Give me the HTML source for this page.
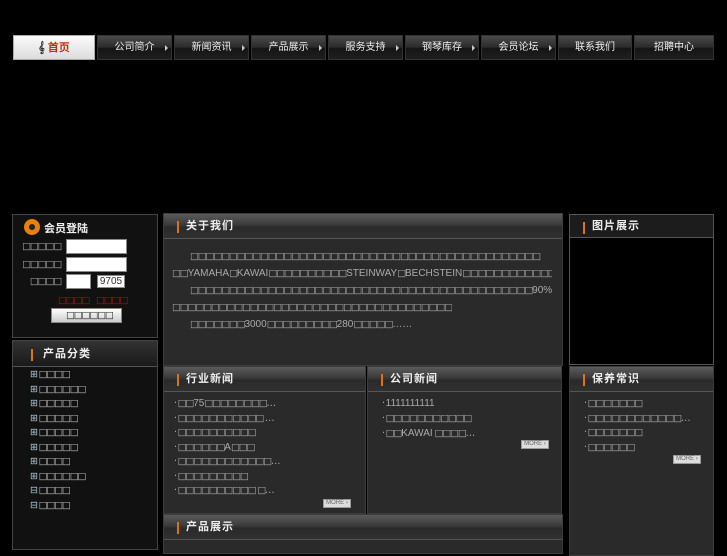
<!DOCTYPE html>
<html><head><meta charset="utf-8"><style>
*{margin:0;padding:0;box-sizing:border-box}
body{width:727px;height:545px;background:#000;position:relative;overflow:hidden;font-family:"Liberation Sans","Noto Sans CJK SC",sans-serif;color:#ccc;font-size:11px}
.a{position:absolute}
.nav{top:35px;height:25px;background:linear-gradient(#4a4a4a,#2a2a2a 50%,#151515 52%,#1e1e1e);border:1px solid #333;color:#eee;font-size:10px;text-align:center;line-height:24px}
.nav:after{content:"";position:absolute;right:3px;top:9px;border-left:3px solid #ccc;border-top:3px solid transparent;border-bottom:3px solid transparent}
.nav.n:after{display:none}
.panel{background:#2a2a2a;border:1px solid #3c3c3c}
.hd{height:25px;background:linear-gradient(#5a5a5a,#3a3a3a 45%,#2a2a2a 55%,#303030);border-bottom:1px solid #555;color:#eee;font-weight:bold;font-size:11px;line-height:25px;padding-left:22px;position:relative;letter-spacing:1px}
.hd:before{content:"";position:absolute;left:13px;top:7px;width:2px;height:12px;background:#e07010}
.b{font-family:"DejaVu Sans",sans-serif;font-size:9.5px;color:#aaa;letter-spacing:-1.2px}
.b2{font-family:"Liberation Sans",sans-serif;letter-spacing:0;font-size:10px}
.more{position:absolute;width:28px;height:9px;background:#ddd;border:1px solid #999;font-size:6px;color:#666;line-height:7px;text-align:center}
</style></head><body>
<div class="a" style="left:13px;top:35px;width:82px;height:25px;background:linear-gradient(#fafafa,#ddd);border:1px solid #aaa;color:#c03010;font-weight:bold;font-size:11px;line-height:24px;text-align:center"><span style="color:#333">𝄞</span> 首页</div>
<div class="a nav" style="left:97px;width:75px">公司简介</div>
<div class="a nav" style="left:174px;width:75px">新闻资讯</div>
<div class="a nav" style="left:251px;width:75px">产品展示</div>
<div class="a nav" style="left:328px;width:75px">服务支持</div>
<div class="a nav" style="left:405px;width:74px">钢琴库存</div>
<div class="a nav" style="left:481px;width:75px">会员论坛</div>
<div class="a nav n" style="left:558px;width:74px">联系我们</div>
<div class="a nav n" style="left:634px;width:80px">招聘中心</div>

<div class="a" style="left:12px;top:214px;width:146px;height:124px;background:#111;border:1px solid #444">
<div class="a" style="left:11px;top:4px;width:16px;height:16px;border-radius:50%;background:#e8800a"><div class="a" style="left:5px;top:5px;width:6px;height:6px;border-radius:50%;background:#222"></div></div>
<div class="a" style="left:31px;top:5px;font-weight:bold;color:#eee;font-size:11px">会员登陆</div>
<div class="a b" style="right:96px;top:26px">□□□□□</div><div class="a" style="left:53px;top:24px;width:61px;height:15px;background:#fff;border:1px solid #888"></div>
<div class="a b" style="right:96px;top:44px">□□□□□</div><div class="a" style="left:53px;top:42px;width:61px;height:15px;background:#fff;border:1px solid #888"></div>
<div class="a b" style="right:96px;top:61px">□□□□</div><div class="a" style="left:53px;top:59px;width:25px;height:15px;background:#fff;border:1px solid #888"></div>
<div class="a" style="left:84px;top:60px;width:28px;height:13px;background:#fff;border:1px solid #888;color:#333;font-size:10px;line-height:11px;text-align:center">9705</div>
<div class="a b" style="left:45px;top:80px;color:#d00">□□□□</div><div class="a b" style="left:83px;top:80px;color:#d00">□□□□</div>
<div class="a" style="left:38px;top:93px;width:71px;height:15px;background:linear-gradient(#fff,#ccc);border:1px solid #888"><span class="b" style="position:absolute;left:14px;top:1px;color:#222">□□□□□□</span></div>
</div>

<div class="a" style="left:12px;top:340px;width:146px;height:210px;background:#111;border:1px solid #444">
<div style="position:relative;height:26px;background:linear-gradient(#333,#1a1a1a);border-bottom:1px solid #555;color:#eee;font-weight:bold;font-size:11px;line-height:26px;padding-left:30px;letter-spacing:1px">产品分类<i style="position:absolute;left:18px;top:8px;width:2px;height:12px;background:#e07010"></i></div>
<div class="a b" style="left:17px;top:27px;line-height:14.5px;color:#bbb">
<div><span style="color:#acd">⊞</span> □□□□</div><div><span style="color:#acd">⊞</span> □□□□□□</div><div><span style="color:#acd">⊞</span> □□□□□</div><div><span style="color:#acd">⊞</span> □□□□□</div><div><span style="color:#acd">⊞</span> □□□□□</div><div><span style="color:#acd">⊞</span> □□□□□</div><div><span style="color:#acd">⊞</span> □□□□</div><div><span style="color:#acd">⊞</span> □□□□□□</div><div><span style="color:#acd">⊟</span> □□□□</div><div><span style="color:#acd">⊟</span> □□□□</div></div>
</div>

<div class="a panel" style="left:163px;top:213px;width:400px;height:153px">
<div class="hd">关于我们</div>
<div class="a b" style="left:8px;top:34px;width:380px;line-height:17px">
<div style="padding-left:18px;white-space:nowrap;overflow:hidden">□□□□□□□□□□□□□□□□□□□□□□□□□□□□□□□□□□□□□□□□□□□□□</div>
<div style="white-space:nowrap;overflow:hidden">□□<span class="b2">YAMAHA</span>□<span class="b2">KAWAI</span>□□□□□□□□□□<span class="b2">STEINWAY</span>□<span class="b2">BECHSTEIN</span>□□□□□□□□□□□□□□□□</div>
<div style="padding-left:18px;white-space:nowrap;overflow:hidden">□□□□□□□□□□□□□□□□□□□□□□□□□□□□□□□□□□□□□□□□□□□□<span class="b2">90%</span></div>
<div style="white-space:nowrap;overflow:hidden;width:280px">□□□□□□□□□□□□□□□□□□□□□□□□□□□□□□□□□□□□□□□□□□□□□</div>
<div style="padding-left:18px">□□□□□□□<span class="b2">3000</span>□□□□□□□□□<span class="b2">280</span>□□□□□<span class="b2">……</span></div></div>
</div>

<div class="a panel" style="left:163px;top:366px;width:203px;height:148px">
<div class="hd">行业新闻</div>
<div class="a b" style="left:10px;top:30px;line-height:14.5px">
<div>· □□<span class="b2">75</span>□□□□□□□□…</div><div>· □□□□□□□□□□□ …</div><div>· □□□□□□□□□□</div><div>· □□□□□□<span class="b2">A</span>□□□</div><div>· □□□□□□□□□□□□…</div><div>· □□□□□□□□□</div><div>· □□□□□□□□□□ □…</div></div>
<div class="more" style="left:159px;top:132px">MORE ›</div>
</div>
<div class="a panel" style="left:367px;top:366px;width:195px;height:148px">
<div class="hd">公司新闻</div>
<div class="a b" style="left:14px;top:29px;line-height:15px">
<div>· <span class="b2">1111111111</span></div><div>· □□□□□□□□□□□</div><div>· □□<span class="b2">KAWAI</span> □□□□…</div></div>
<div class="more" style="left:153px;top:73px">MORE ›</div>
</div>
<div class="a panel" style="left:163px;top:514px;width:400px;height:40px"><div class="hd">产品展示</div></div>

<div class="a" style="left:569px;top:214px;width:145px;height:151px;background:#000;border:1px solid #555">
<div class="hd" style="background:#1c1c1c;height:23px;line-height:23px">图片展示</div></div>
<div class="a panel" style="left:569px;top:366px;width:145px;height:190px">
<div class="hd">保养常识</div>
<div class="a b" style="left:14px;top:30px;line-height:14.5px">
<div>· □□□□□□□</div><div>· □□□□□□□□□□□□…</div><div>· □□□□□□□</div><div>· □□□□□□</div></div>
<div class="more" style="left:103px;top:88px">MORE ›</div>
</div>
</body></html>
